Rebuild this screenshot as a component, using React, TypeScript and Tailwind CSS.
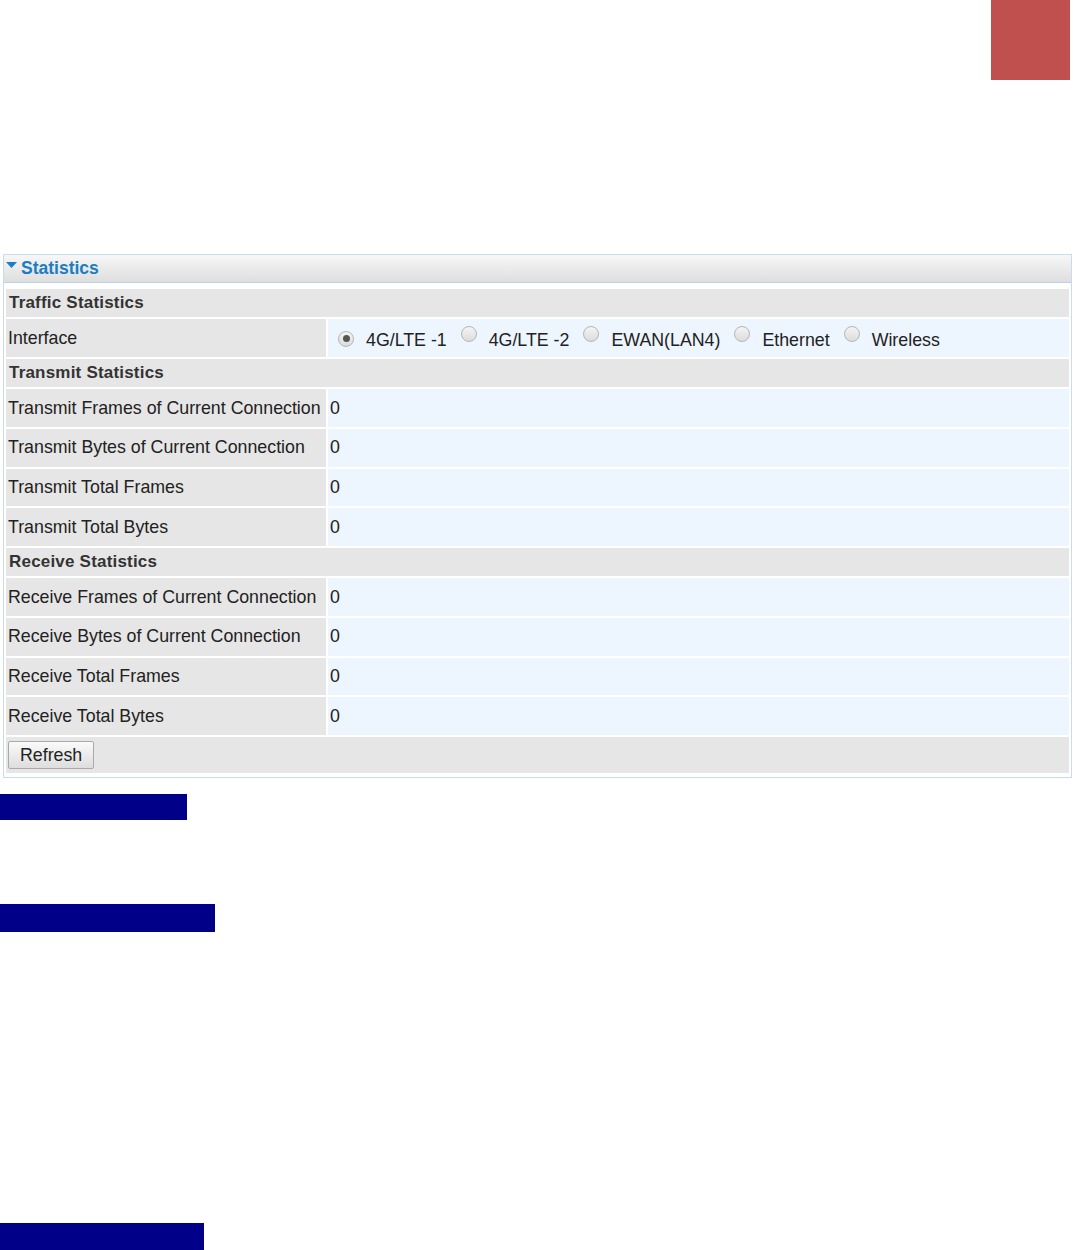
import React from "react";

const transmit = [
  "Transmit Frames of Current Connection",
  "Transmit Bytes of Current Connection",
  "Transmit Total Frames",
  "Transmit Total Bytes",
];
const receive = [
  "Receive Frames of Current Connection",
  "Receive Bytes of Current Connection",
  "Receive Total Frames",
  "Receive Total Bytes",
];
const interfaces = ["4G/LTE -1", "4G/LTE -2", "EWAN(LAN4)", "Ethernet", "Wireless"];

function Section({ title }: { title: string }) {
  return (
    <tr>
      <td colSpan={2} className="h-[28px] bg-[#e6e6e6] px-[3px] py-0 text-[17px] font-bold text-[#333] tracking-[0.2px]">
        {title}
      </td>
    </tr>
  );
}

function Row({ label, value }: { label: string; value: React.ReactNode }) {
  return (
    <tr>
      <td className="h-[37.75px] w-[320px] whitespace-nowrap bg-[#e6e6e6] px-[2px] py-0 text-[17.8px] text-[#222]">{label}</td>
      <td className="h-[37.75px] bg-[#edf5fe] px-[2px] py-0 text-[17.8px] text-[#222]">{value}</td>
    </tr>
  );
}

function Radio({ checked }: { checked?: boolean }) {
  return (
    <span className="inline-flex h-[16px] w-[16px] items-center justify-center rounded-full border border-[#b5b5b5] bg-gradient-to-b from-[#f4f4f4] to-[#dcdcdc]">
      {checked && <span className="h-[7px] w-[7px] rounded-full bg-[#555]" />}
    </span>
  );
}

export default function App() {
  return (
    <div className="relative h-[1250px] w-[1074px] bg-white font-['Liberation_Sans',Arial,sans-serif]">
      <div className="flex justify-end pr-[4px]">
        <div className="h-[80px] w-[79px] bg-[#c0504d]" />
      </div>

      <div className="ml-[3px] mr-[2px] mt-[174px] border border-[#c9dcec] pb-[2px]">
        <div className="flex h-[28px] items-center border-b border-[#b8d3ea] bg-gradient-to-b from-[#f7f7f7] to-[#dedede] pl-[2px] text-[17.5px] font-bold text-[#1a7ec2]">
          <svg width="11" height="8" viewBox="0 0 11 8" className="mb-[6px] mr-[4px]">
            <path d="M0 0 L11 0 L5.5 6 Z" fill="#1a7ec2" />
          </svg>
          Statistics
        </div>
        <table className="mt-[4px] w-full border-separate border-spacing-[2px]">
          <tbody>
            <Section title="Traffic Statistics" />
            <tr>
              <td className="h-[38px] w-[320px] whitespace-nowrap bg-[#e6e6e6] px-[2px] py-0 text-[17.8px] text-[#222]">Interface</td>
              <td className="h-[38px] bg-[#edf5fe] py-0 pl-[10px] text-[17.8px] text-[#222]">
                <div className="flex items-center pt-[4px]">
                  {interfaces.map((name, i) => (
                    <label key={name} className="mr-[14px] flex items-center">
                      <span className="-mt-[7px]">
                        <Radio checked={i === 0} />
                      </span>
                      <span className="ml-[12px]">{name}</span>
                    </label>
                  ))}
                </div>
              </td>
            </tr>
            <Section title="Transmit Statistics" />
            {transmit.map((l) => (
              <Row key={l} label={l} value="0" />
            ))}
            <Section title="Receive Statistics" />
            {receive.map((l) => (
              <Row key={l} label={l} value="0" />
            ))}
            <tr>
              <td colSpan={2} className="h-[36px] bg-[#e6e6e6] px-[2px] py-0">
                <button className="h-[28px] rounded-[2px] border border-[#a9a9a9] bg-gradient-to-b from-[#fafafa] to-[#dddddd] px-[11px] text-[17.8px] text-[#222]">
                  Refresh
                </button>
              </td>
            </tr>
          </tbody>
        </table>
      </div>

      <div className="mt-[16px] h-[26px] w-[187px] bg-[#000088]" />
      <div className="mt-[84px] h-[28px] w-[215px] bg-[#000088]" />
      <div className="mt-[291px] h-[27px] w-[204px] bg-[#000088]" />
    </div>
  );
}
